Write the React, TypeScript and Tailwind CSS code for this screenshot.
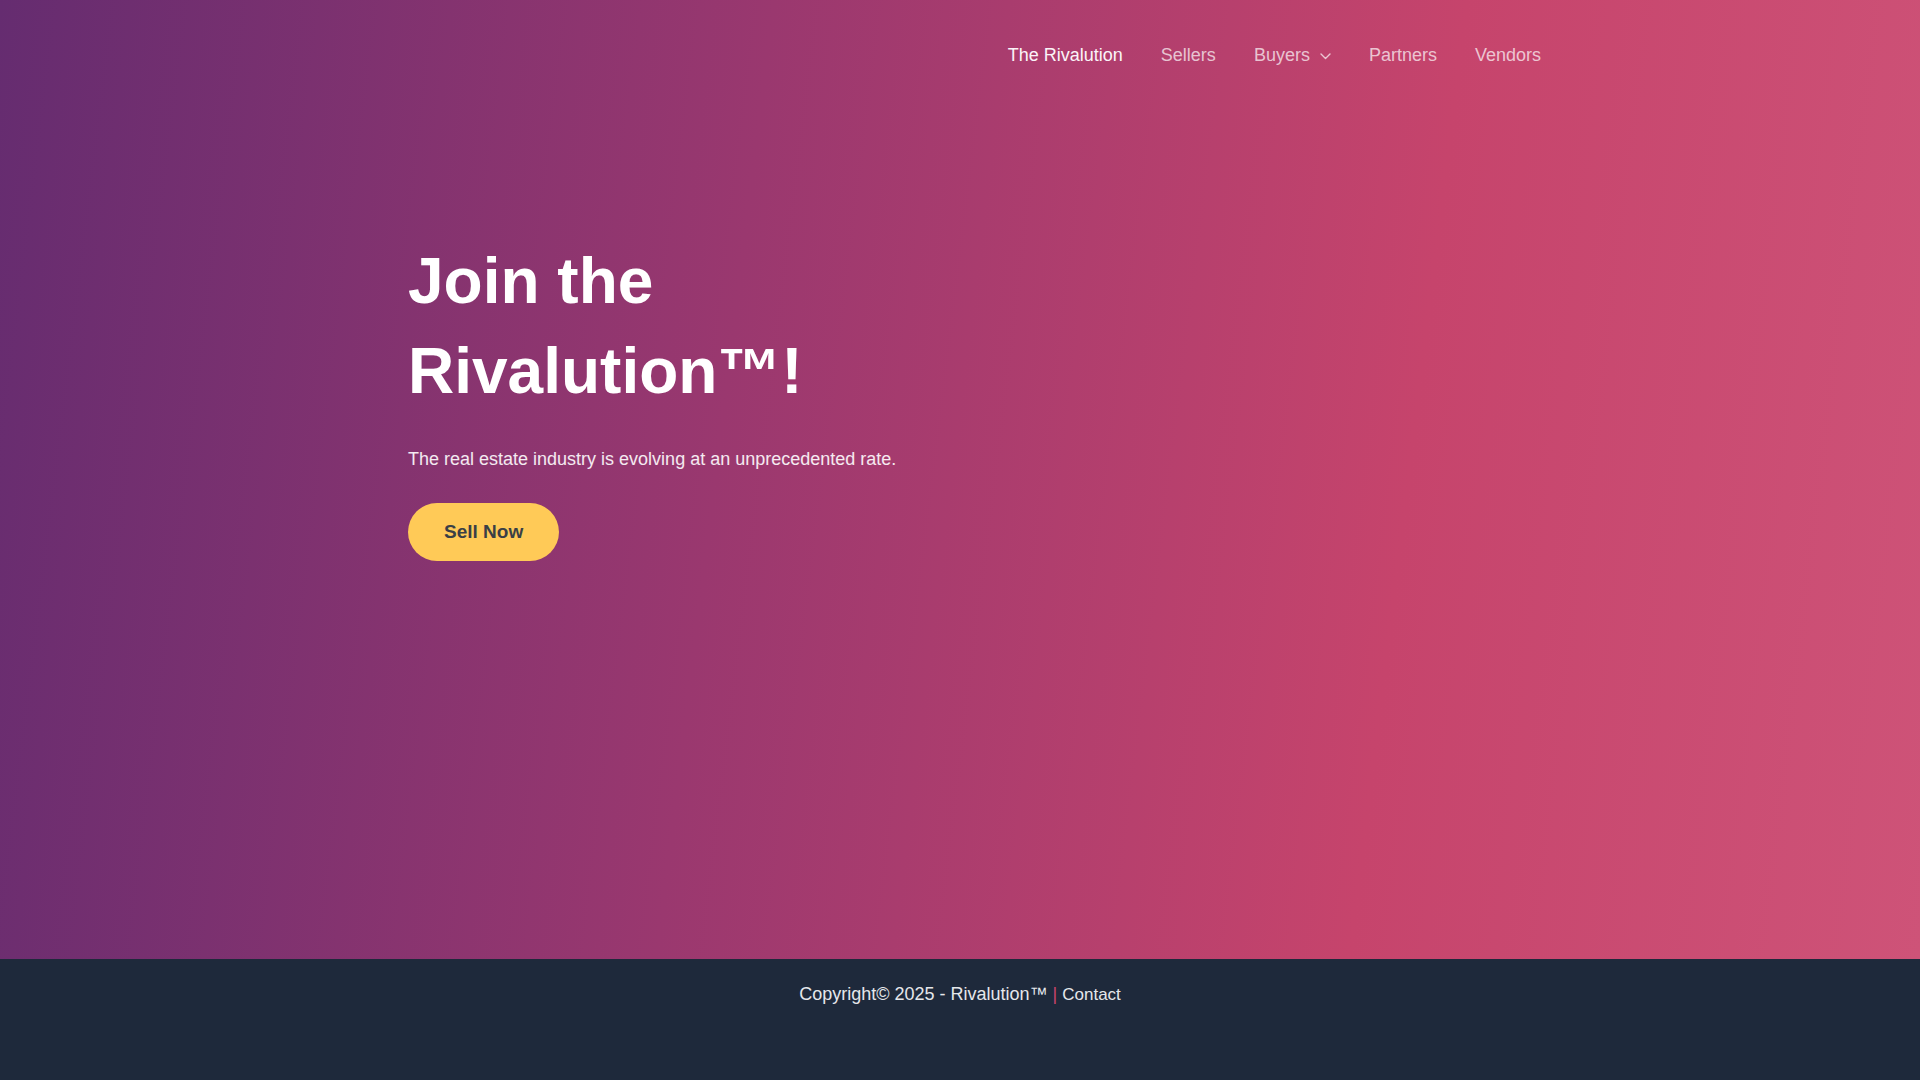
const navItems = [
  { label: 'The Rivalution', active: true },
  { label: 'Sellers' },
  { label: 'Buyers', dropdown: true },
  { label: 'Partners' },
  { label: 'Vendors' },
];

const Chevron = () => (
  <svg width="11" height="7" viewBox="0 0 11 7" fill="none" className="ml-[10px] mt-[2px]">
    <path d="M1 1l4.5 4.5L10 1" stroke="currentColor" strokeWidth="1.4" strokeLinecap="round" strokeLinejoin="round" />
  </svg>
);

const App = () => {
  return (
    <div className="min-h-screen flex flex-col font-['Liberation_Sans',Arial,sans-serif]">
      <section className="h-[959px] bg-[linear-gradient(97deg,#652c70_0%,#9a386f_38%,#c6446c_72%,#ce5378_100%)]">
        <div className="w-[1200px] mx-auto">
          <header className="flex justify-end items-center h-[111px]">
            <nav className="flex items-center">
              {navItems.map((item) => (
                <a
                  key={item.label}
                  href="#"
                  className={`flex items-center px-[19px] text-[18px] last:pr-[19px] ${
                    item.active ? 'text-[#fbf4f8]' : 'text-white/70'
                  }`}
                >
                  {item.label}
                  {item.dropdown && <Chevron />}
                </a>
              ))}
            </nav>
          </header>

          <div className="pl-[48px] pt-[126px]">
            <h1 className="text-[64px] leading-[1.4] font-bold text-white w-[560px]">
              Join the Rivalution™!
            </h1>
            <p className="mt-[29px] text-[18px] leading-[1.6] text-white/90">
              The real estate industry is evolving at an unprecedented rate.
            </p>
            <a
              href="#"
              className="mt-[29px] inline-flex items-center h-[58px] px-[36px] rounded-full bg-[#ffca57] text-[#3a3f46] text-[19px] font-bold"
            >
              Sell Now
            </a>
          </div>
        </div>
      </section>

      <footer className="flex-1 bg-[#1e293b] pt-[21px] pb-[60px]">
        <p className="text-center text-[#e5e7eb] leading-[1.6]">
          <span className="text-[18px]">Copyright© 2025 - Rivalution™</span>
          <span className="text-[#c6446c] text-[18px] mx-[5px]">|</span>
          <a href="#" className="text-[17px]">Contact</a>
        </p>
      </footer>
    </div>
  );
};

export default App;
